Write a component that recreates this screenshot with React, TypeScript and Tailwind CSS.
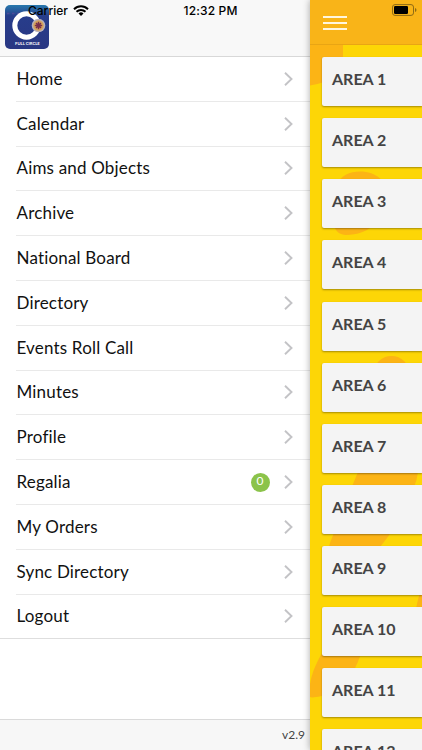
interface MenuItem {
  label: string;
  badge?: number;
}

const menuItems: MenuItem[] = [
  { label: "Home" },
  { label: "Calendar" },
  { label: "Aims and Objects" },
  { label: "Archive" },
  { label: "National Board" },
  { label: "Directory" },
  { label: "Events Roll Call" },
  { label: "Minutes" },
  { label: "Profile" },
  { label: "Regalia", badge: 0 },
  { label: "My Orders" },
  { label: "Sync Directory" },
  { label: "Logout" },
];

const areas = Array.from({ length: 12 }, (_, i) => `AREA ${i + 1}`);

function Logo() {
  return (
    <div className="relative mt-[5px] ml-[5.4px] h-11 w-11 overflow-hidden rounded-[5px] bg-linear-to-b from-[#2879ad] via-[#273d8b] via-25% to-[#293783]">
      <svg className="absolute inset-0" width="44" height="44" viewBox="0 0 44 44" fill="none">
        <path d="M2 8.5h17" stroke="#4d4b98" strokeWidth="1.6" strokeDasharray="2.5 2.5" />
        <circle cx="21.5" cy="20.5" r="11.7" stroke="#fff" strokeWidth="5" />
        <circle cx="33.5" cy="20.5" r="6.8" fill="#b8b0ba" />
        <circle cx="33.5" cy="20.5" r="5.3" fill="#d5a35c" />
        <path d="M33.5 16.8v7.4M29.8 20.5h7.4M31 18l5 5M36 18l-5 5" stroke="#782d4c" strokeWidth="1.5" />
      </svg>
      <span className="absolute inset-x-0 top-[35.5px] text-center text-[4.2px] leading-[5px] font-bold text-white">
        FULL CIRCLE
      </span>
    </div>
  );
}

function StatusBar() {
  return (
    <div className="absolute inset-x-0 top-0 z-20 h-5 font-['Inter','Liberation_Sans',sans-serif] text-[12px] font-medium text-black">
      <span className="absolute top-[3px] left-[28px] leading-4">Carrier</span>
      <svg className="absolute top-[5px] left-[73px]" width="16" height="11" viewBox="0 0 16 11" fill="none">
        <path d="M1 4.2a10 10 0 0 1 14 0" stroke="#000" strokeWidth="2" />
        <path d="M3.5 6.8a6.5 6.5 0 0 1 9 0" stroke="#000" strokeWidth="1.9" />
        <path d="M5.5 8.4a3.6 3.6 0 0 1 5 0L8 11z" fill="#000" />
      </svg>
      <span className="absolute top-[3px] left-[183.5px] leading-4 tracking-[0.15px]">12:32 PM</span>
      <svg className="absolute top-1 left-[392px]" width="25" height="12" viewBox="0 0 25 12" fill="none">
        <rect x="0.5" y="0.6" width="21" height="10.8" rx="2.5" stroke="#8e6a14" />
        <rect x="2" y="2.1" width="14" height="7.8" rx="1.2" fill="#000" />
        <path d="M23 4q1.500.6 1.500 2T23 8z" fill="#8e6a14" />
      </svg>
    </div>
  );
}

function MenuRow({ item, last }: { item: MenuItem; last: boolean }) {
  return (
    <li className={last ? "border-b border-[#dedede]" : "pl-4"}>
      <div
        className={
          last
            ? "flex h-[43.8px] items-center pr-[17px] pl-[16.5px]"
            : "flex h-[44.8px] items-center border-b border-[#e9e9e9] pr-[17px] pl-[0.5px]"
        }
      >
        <span className="flex-1 text-[17px] leading-5 tracking-[0.18px] text-[#111]">{item.label}</span>
        {item.badge !== undefined && (
          <span className="mr-[14.5px] h-[19px] w-[19px] rounded-full bg-[#8bc34a] text-center text-[12px] leading-4 text-white">
            {item.badge}
          </span>
        )}
        <svg width="9" height="14" viewBox="0 0 9 14" fill="none">
          <path d="M1 .8 7.5 7 1 13.2" stroke="#c3c3c6" strokeWidth="1.9" />
        </svg>
      </div>
    </li>
  );
}

function SideMenu() {
  return (
    <aside className="flex w-[310px] shrink-0 flex-col bg-white">
      <header className="h-[57px] shrink-0 border-b border-[#d8d8d8] bg-[#f8f8f8]">
        <Logo />
      </header>
      <ul className="flex-1">
        {menuItems.map((item, i) => (
          <MenuRow key={item.label} item={item} last={i === menuItems.length - 1} />
        ))}
      </ul>
      <footer className="flex h-[31px] items-center justify-end border-t border-[#dadada] bg-[#f7f7f7] pr-[5px] text-[12px] text-[#444]">
        v2.9
      </footer>
    </aside>
  );
}

function Backdrop() {
  return (
    <svg className="absolute inset-0" width="112" height="750" viewBox="0 0 112 750" fill="#fcb415">
      <path d="M0 0H33V60Q33 80 0 85.5z" />
      <path d="M26 187C30 175 40 171.5 50 171.5C66 171.5 78 181 78 198C78 219 58 235 36 235C24 235 18 222 26 187z" />
      <circle cx="81.5" cy="374" r="18" />
      <path d="M48 472H108Q107 480 104 487Q94 518 70 547L60 560H15Q20 540 28 524Q38 495 48 472z" />
      <path d="M112 588Q108 597 106 609H112z" />
      <path d="M14 650H52Q49 661 42 674C33 689 20 696 2 697.500L0 697V684C2 672 7 661 14 650z" />
    </svg>
  );
}

function AreaPanel() {
  return (
    <main className="relative flex w-[112px] shrink-0 flex-col bg-[#fdd606] shadow-[0_0_7px_rgba(0,0,0,0.35)]">
      <Backdrop />
      <header className="relative h-[45px] shrink-0 border-b border-[#e9a514] bg-[#f9b418] pt-4 pl-[13px]">
        <div className="flex w-6 flex-col gap-1">
          <span className="h-[2px] bg-[#fff6df]" />
          <span className="h-[2px] bg-[#fff6df]" />
          <span className="h-[2px] bg-[#fff6df]" />
        </div>
      </header>
      <div className="relative flex flex-col gap-[12.1px] pt-[12.2px] pl-3">
        {areas.map((area) => (
          <div
            key={area}
            className="flex h-[49px] items-center rounded-l-[2px] bg-[#f4f4f4] pb-[5px] pl-[10px] text-[16px] font-bold text-[#444] shadow-[0_1px_2px_rgba(0,0,0,0.35)]"
          >
            {area}
          </div>
        ))}
      </div>
    </main>
  );
}

export default function App() {
  return (
    <div className="relative flex h-[750px] w-[422px] overflow-hidden bg-white font-['Lato','Liberation_Sans',sans-serif]">
      <SideMenu />
      <AreaPanel />
      <StatusBar />
    </div>
  );
}
